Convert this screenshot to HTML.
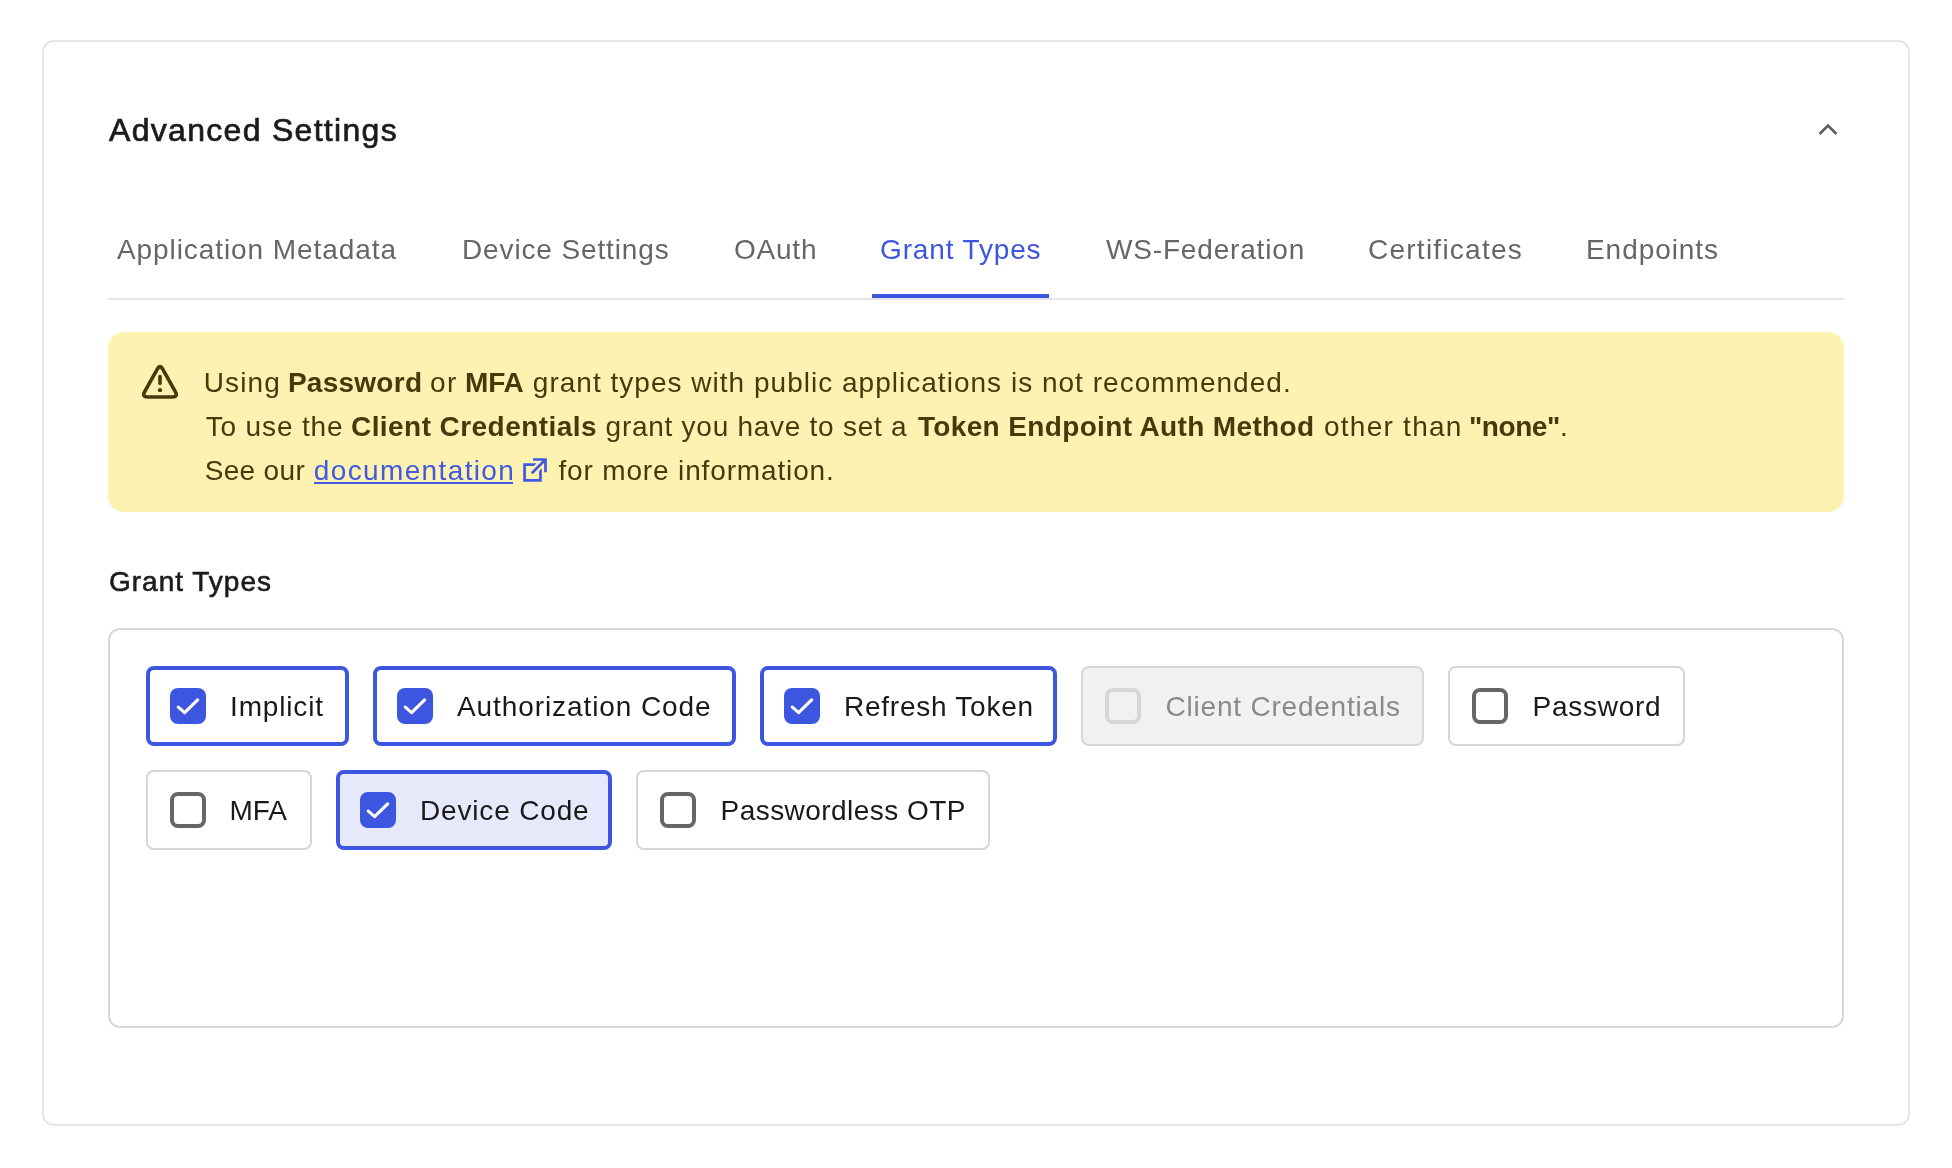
<!DOCTYPE html>
<html>
<head>
<meta charset="utf-8">
<style>
html,body{margin:0;padding:0;background:#ffffff;}
body{width:1952px;height:1168px;position:relative;overflow:hidden;font-family:"Liberation Sans",sans-serif;}
.abs{position:absolute;}
.wrap{position:absolute;left:0;top:0;width:1952px;height:1168px;will-change:transform;}
.card{position:absolute;left:42px;top:40px;width:1864px;height:1082px;border:2px solid #e6e6e6;border-radius:12px;background:#fff;}
.title{position:absolute;left:109px;top:110px;font-size:32px;line-height:40px;color:#1b1b1b;letter-spacing:1.3px;white-space:nowrap;-webkit-text-stroke:0.7px #1b1b1b;}
.chev{position:absolute;left:1810px;top:112px;}
.tab{position:absolute;top:230px;font-size:28px;line-height:40px;color:#666666;white-space:nowrap;}
.tabline{position:absolute;left:108px;top:298px;width:1736px;height:2px;background:#e5e5e5;}
.active-ul{position:absolute;left:872px;top:294px;width:177px;height:4px;background:#3d56e0;}
.alert{position:absolute;left:108px;top:332px;width:1736px;height:180px;background:#fdf2b1;border-radius:16px;}
.aline{position:absolute;left:205px;font-size:28px;line-height:44px;color:#443a0c;white-space:nowrap;letter-spacing:0.85px;}
.aline b{font-weight:700;letter-spacing:0.2px;}
.link{color:#3f59e4;}
.ul{position:absolute;left:314px;top:481.5px;width:198.5px;height:2px;background:#3f59e4;}
.label{position:absolute;left:109px;top:562px;font-size:28px;line-height:40px;color:#1b1b1b;letter-spacing:1.0px;white-space:nowrap;-webkit-text-stroke:0.6px #1b1b1b;}
.gbox{position:absolute;left:108px;top:628px;width:1732px;height:396px;border:2px solid #d6d6d6;border-radius:12px;}
.item{position:absolute;height:80px;box-sizing:border-box;border:2px solid #d6d6d6;border-radius:8px;background:#fff;}
.item.on{border:4px solid #3d56e0;}
.item.dev{background:#e6e9fa;}
.item.dis{background:#f1f1f1;}
.cb{position:absolute;left:22px;top:20px;width:36px;height:36px;box-sizing:border-box;border:4px solid #666;border-radius:8px;}
.on .cb{left:20px;top:18px;background:#3d56e0;border:none;}
.dis .cb{border-color:#d6d6d6;}
.cb svg{position:absolute;left:0;top:0;}
.it{position:absolute;top:1px;font-size:28px;line-height:76px;color:#191919;white-space:nowrap;}
.on .it{line-height:72px;}
.dis .it{color:#8a8a8a;}
</style>
</head>
<body><div class="wrap">
<div class="card"></div>
<div class="title">Advanced Settings</div>
<svg class="chev" width="36" height="36" viewBox="0 0 36 36"><path d="M9.5 22 L18 13.5 L26.5 22" fill="none" stroke="#5c5c5c" stroke-width="2.6"/></svg>

<div class="tab" style="left:117px;letter-spacing:0.92px">Application Metadata</div>
<div class="tab" style="left:462px;letter-spacing:0.87px">Device Settings</div>
<div class="tab" style="left:734px;letter-spacing:0.77px">OAuth</div>
<div class="tab" style="left:880px;letter-spacing:0.86px;color:#3d56e0">Grant Types</div>
<div class="tab" style="left:1106px;letter-spacing:0.83px">WS-Federation</div>
<div class="tab" style="left:1368px;letter-spacing:1.25px">Certificates</div>
<div class="tab" style="left:1586px;letter-spacing:0.94px">Endpoints</div>
<div class="tabline"></div>
<div class="active-ul"></div>

<div class="alert"></div>
<svg class="abs" style="left:0;top:0" width="600" height="520" viewBox="0 0 600 520">
  <path d="M157.3 369.2 Q160 364.0 162.7 369.2 L175.3 391.6 Q178.3 397 172.2 397 L147.8 397 Q141.7 397 144.7 391.6 Z" fill="none" stroke="#443a0c" stroke-width="3.6" stroke-linejoin="round"/>
  <path d="M160 376.6 V383.4" stroke="#443a0c" stroke-width="3.6" stroke-linecap="round"/>
  <circle cx="160" cy="390.2" r="2.1" fill="#443a0c"/>
</svg>
<div class="aline" style="left:203.7px;top:361px;letter-spacing:1.122px">Using</div>
<div class="aline" style="left:287.9px;top:361px;font-weight:700;letter-spacing:0.261px">Password</div>
<div class="aline" style="left:430px;top:361px;letter-spacing:1.428px">or</div>
<div class="aline" style="left:465.1px;top:361px;font-weight:700;letter-spacing:-0.291px">MFA</div>
<div class="aline" style="left:532.8px;top:361px;letter-spacing:1.017px">grant types with public applications is not recommended.</div>
<div class="aline" style="left:205.7px;top:405px;letter-spacing:0.853px">To use the</div>
<div class="aline" style="left:351px;top:405px;font-weight:700;letter-spacing:0.436px">Client Credentials</div>
<div class="aline" style="left:605.6px;top:405px;letter-spacing:0.733px">grant you have to set a</div>
<div class="aline" style="left:917.9px;top:405px;font-weight:700;letter-spacing:0.36px">Token Endpoint Auth Method</div>
<div class="aline" style="left:1324px;top:405px;letter-spacing:1.253px">other than</div>
<div class="aline" style="left:1469px;top:405px;font-weight:700;letter-spacing:-0.432px">&quot;none&quot;</div>
<div class="aline" style="left:1560px;top:405px;letter-spacing:0px">.</div>
<div class="aline" style="left:204.7px;top:449px;letter-spacing:0.326px">See our</div>
<div class="ul"></div>
<div class="aline link" style="left:313.8px;top:449px;letter-spacing:1.366px">documentation</div>
<div class="aline" style="left:558.4px;top:449px;letter-spacing:0.853px">for more information.</div>
<svg class="abs" style="left:0;top:0" width="600" height="520" viewBox="0 0 600 520">
  <path d="M523.2 463.2 H536.6 L533.9 465.9 H525.9 V479.1 H539.1 V470.9 L541.8 468.2 V481.8 H523.2 Z" fill="#3f59e4"/>
  <path d="M533 459.5 H545.5 V472.3 M545.5 459.5 L531.8 473.2" fill="none" stroke="#3f59e4" stroke-width="2.7"/>
</svg>

<div class="label">Grant Types</div>
<div class="gbox"></div>

<!-- row 1 -->
<div class="item on" style="left:146px;top:666px;width:203px">
  <div class="cb"><svg width="36" height="36" viewBox="0 0 36 36"><path d="M8.3 19.1 L14.6 24.6 L27.6 11.9" fill="none" stroke="#fff" stroke-width="3.2" stroke-linecap="round" stroke-linejoin="round"/></svg></div>
  <div class="it" style="left:80px;letter-spacing:0.85px">Implicit</div>
</div>
<div class="item on" style="left:373px;top:666px;width:363px">
  <div class="cb"><svg width="36" height="36" viewBox="0 0 36 36"><path d="M8.3 19.1 L14.6 24.6 L27.6 11.9" fill="none" stroke="#fff" stroke-width="3.2" stroke-linecap="round" stroke-linejoin="round"/></svg></div>
  <div class="it" style="left:80px;letter-spacing:0.91px">Authorization Code</div>
</div>
<div class="item on" style="left:760px;top:666px;width:297px">
  <div class="cb"><svg width="36" height="36" viewBox="0 0 36 36"><path d="M8.3 19.1 L14.6 24.6 L27.6 11.9" fill="none" stroke="#fff" stroke-width="3.2" stroke-linecap="round" stroke-linejoin="round"/></svg></div>
  <div class="it" style="left:80px;letter-spacing:0.75px">Refresh Token</div>
</div>
<div class="item dis" style="left:1081px;top:666px;width:343px">
  <div class="cb"></div>
  <div class="it" style="left:82.5px;letter-spacing:0.79px">Client Credentials</div>
</div>
<div class="item" style="left:1448px;top:666px;width:237px">
  <div class="cb"></div>
  <div class="it" style="left:82.5px;letter-spacing:0.75px">Password</div>
</div>

<!-- row 2 -->
<div class="item" style="left:146px;top:770px;width:166px">
  <div class="cb"></div>
  <div class="it" style="left:81.5px;letter-spacing:-0.1px">MFA</div>
</div>
<div class="item on dev" style="left:336px;top:770px;width:276px">
  <div class="cb"><svg width="36" height="36" viewBox="0 0 36 36"><path d="M8.3 19.1 L14.6 24.6 L27.6 11.9" fill="none" stroke="#fff" stroke-width="3.2" stroke-linecap="round" stroke-linejoin="round"/></svg></div>
  <div class="it" style="left:80px;letter-spacing:0.83px">Device Code</div>
</div>
<div class="item" style="left:636px;top:770px;width:354px">
  <div class="cb"></div>
  <div class="it" style="left:82.5px;letter-spacing:0.46px">Passwordless OTP</div>
</div>

</div>
</body>
</html>
